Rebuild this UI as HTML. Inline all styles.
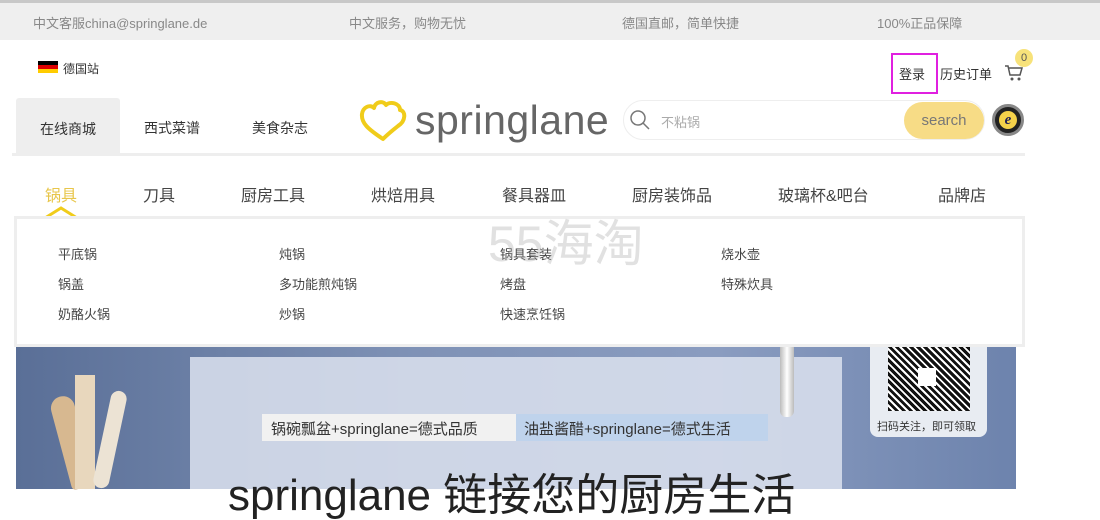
<!DOCTYPE html>
<html><head><meta charset="utf-8"><style>
*{margin:0;padding:0;box-sizing:border-box}
body{width:1100px;height:489px;overflow:hidden;background:#fff;font-family:"Liberation Sans","Noto Sans CJK SC",sans-serif;color:#555;position:relative}
.a{position:absolute;white-space:nowrap}
</style></head><body>
<div class="a" style="left:0;top:0;width:1100px;height:40px;background:#efefef;border-top:3px solid #c8c8c8"></div>
<div class="a" style="left:33px;top:13px;font-size:13px;color:#888">中文客服china@springlane.de</div>
<div class="a" style="left:349px;top:13px;font-size:13px;color:#888">中文服务，购物无忧</div>
<div class="a" style="left:622px;top:13px;font-size:13px;color:#888">德国直邮，简单快捷</div>
<div class="a" style="left:877px;top:13px;font-size:13px;color:#888">100%正品保障</div>

<div class="a" style="left:38px;top:61px;width:20px;height:12px;background:linear-gradient(#000 33%,#d00 33%,#d00 66%,#fc0 66%)"></div>
<div class="a" style="left:63px;top:60px;font-size:12px;color:#333">德国站</div>

<div class="a" style="left:891px;top:53px;width:47px;height:41px;border:2px solid #e020e0"></div>
<div class="a" style="left:899px;top:64px;font-size:13px;color:#333">登录</div>
<div class="a" style="left:940px;top:64px;font-size:13px;color:#333">历史订单</div>
<svg class="a" style="left:1004px;top:64px" width="20" height="18" viewBox="0 0 20 18"><path d="M1 2h3l2 9h10l2-7H5" fill="none" stroke="#555" stroke-width="1.5"/><circle cx="8" cy="15" r="1.5" fill="#555"/><circle cx="15" cy="15" r="1.5" fill="#555"/></svg>
<div class="a" style="left:1015px;top:49px;width:18px;height:18px;border-radius:50%;background:#f7e27a;font-size:11px;text-align:center;line-height:18px;color:#555">0</div>

<div class="a" style="left:16px;top:98px;width:104px;height:56px;background:#eee;border-radius:3px 3px 0 0"></div>
<div class="a" style="left:40px;top:119px;font-size:14px;color:#333">在线商城</div>
<div class="a" style="left:144px;top:118px;font-size:14px;color:#333">西式菜谱</div>
<div class="a" style="left:252px;top:118px;font-size:14px;color:#333">美食杂志</div>
<div class="a" style="left:12px;top:153px;width:1013px;height:3px;background:#eee"></div>

<svg class="a" style="left:358px;top:99px" width="50" height="44" viewBox="0 0 50 44"><path d="M25 40C10 30 3 24 4 15 5 8 12 5 16 9 17 3 25 1 28 6 32 2 42 4 42 11 48 12 48 22 40 27 35 31 30 35 25 40Z" fill="none" stroke="#f0cc1a" stroke-width="4" stroke-linejoin="round"/></svg>
<div class="a" style="left:415px;top:100px;font-size:41px;line-height:1;color:#666;font-family:'Liberation Sans',sans-serif;letter-spacing:0.5px">springlane</div>

<div class="a" style="left:623px;top:100px;width:362px;height:40px;border:1px solid #eee;border-radius:20px;background:#fff"></div>
<svg class="a" style="left:628px;top:108px" width="24" height="24" viewBox="0 0 24 24"><circle cx="10" cy="10" r="7" fill="none" stroke="#777" stroke-width="1.5"/><path d="M15 15l6 6" stroke="#777" stroke-width="1.5"/></svg>
<div class="a" style="left:661px;top:112px;font-size:13px;color:#aaa">不粘锅</div>
<div class="a" style="left:904px;top:102px;width:80px;height:37px;border-radius:19px;background:#f7dc86;font-size:15px;color:#777;text-align:center;line-height:37px">search</div>
<div class="a" style="left:992px;top:104px;width:32px;height:32px;border-radius:50%;background:#222;border:3px solid #888"><div style="margin:4px;width:18px;height:18px;border-radius:50%;background:#f5d24a;color:#225;font:italic bold 15px 'Liberation Serif';text-align:center;line-height:18px">e</div></div>

<div class="a" style="left:45px;top:182px;font-size:16px;color:#e8c64a">锅具</div>
<svg class="a" style="left:44px;top:206px" width="34" height="12" viewBox="0 0 34 12"><path d="M1 12L17 2 33 12" fill="none" stroke="#f0cc1a" stroke-width="3"/></svg>
<div class="a" style="left:143px;top:182px;font-size:16px;color:#444">刀具</div>
<div class="a" style="left:241px;top:182px;font-size:16px;color:#444">厨房工具</div>
<div class="a" style="left:371px;top:182px;font-size:16px;color:#444">烘焙用具</div>
<div class="a" style="left:502px;top:182px;font-size:16px;color:#444">餐具器皿</div>
<div class="a" style="left:632px;top:182px;font-size:16px;color:#444">厨房装饰品</div>
<div class="a" style="left:778px;top:182px;font-size:16px;color:#444">玻璃杯&amp;吧台</div>
<div class="a" style="left:938px;top:182px;font-size:16px;color:#444">品牌店</div>

<div class="a" style="left:14px;top:216px;width:1011px;height:131px;border:3px solid #eee;background:#fff"></div>
<div class="a" style="left:58px;top:240px;font-size:13px;color:#444;line-height:30px">平底锅<br>锅盖<br>奶酪火锅</div>
<div class="a" style="left:279px;top:240px;font-size:13px;color:#444;line-height:30px">炖锅<br>多功能煎炖锅<br>炒锅</div>
<div class="a" style="left:500px;top:240px;font-size:13px;color:#444;line-height:30px">锅具套装<br>烤盘<br>快速烹饪锅</div>
<div class="a" style="left:721px;top:240px;font-size:13px;color:#444;line-height:30px">烧水壶<br>特殊炊具</div>
<div class="a" style="left:488px;top:214px;font-size:50px;line-height:60px;color:rgba(170,170,170,.35)">55海淘</div>

<div class="a" style="left:16px;top:347px;width:1000px;height:142px;background:linear-gradient(90deg,#5a6f97,#7f92b6 40%,#8a9cc0 70%,#6d83ad)"></div>
<div class="a" style="left:190px;top:357px;width:652px;height:132px;background:rgba(220,226,238,.85)"></div>
<div class="a" style="left:60px;top:395px;width:24px;height:94px;background:#d7b890;border-radius:12px 12px 4px 4px;transform:rotate(-15deg)"></div>
<div class="a" style="left:75px;top:375px;width:20px;height:114px;background:#e8d7bd"></div>
<div class="a" style="left:102px;top:390px;width:16px;height:99px;background:#ece3d4;border-radius:8px;transform:rotate(12deg)"></div>
<div class="a" style="left:780px;top:347px;width:14px;height:70px;background:linear-gradient(90deg,#bbb,#fff,#bbb);border-radius:0 0 6px 6px"></div>
<div class="a" style="left:870px;top:347px;width:117px;height:90px;background:#e8ecf2;border-radius:0 0 8px 8px"></div>
<div class="a" style="left:888px;top:347px;width:82px;height:64px;background:repeating-linear-gradient(45deg,#111 0 3px,#fff 3px 5px),#111"></div>
<div class="a" style="left:918px;top:368px;width:18px;height:18px;background:#fff"></div>
<div class="a" style="left:877px;top:418px;font-size:11px;color:#333">扫码关注，即可领取</div>
<div class="a" style="left:262px;top:414px;width:254px;height:27px;background:#f1f1f1"></div>
<div class="a" style="left:516px;top:414px;width:252px;height:27px;background:#bfd3ec"></div>
<div class="a" style="left:271px;top:418px;font-size:15px;color:#333">锅碗瓢盆+springlane=德式品质</div>
<div class="a" style="left:524px;top:418px;font-size:15px;color:#333">油盐酱醋+springlane=德式生活</div>
<div class="a" style="left:228px;top:474px;font-size:44px;line-height:1;color:#222">springlane 链接您的厨房生活</div>
</body></html>
